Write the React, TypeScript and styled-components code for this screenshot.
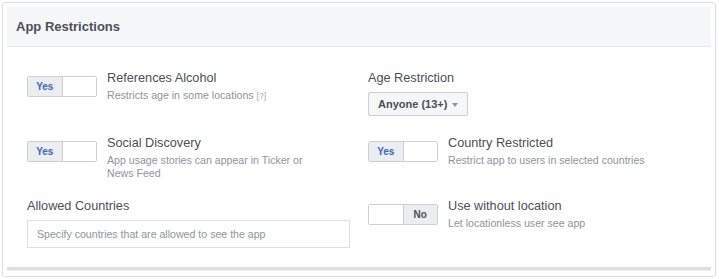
import React from "react";
import styled, { createGlobalStyle } from "styled-components";

const Global = createGlobalStyle`
  html, body { margin: 0; padding: 0; background: #ffffff; }
  body { font-family: "Liberation Sans", Arial, sans-serif; }
  * { box-sizing: border-box; }
`;

const Frame = styled.div`
  margin: 2px 3px 0 2px;
  width: 714px;
  height: 275px;
  border: 1px solid #dcdee1;
  border-radius: 3px;
  padding: 4px;
  background: #fff;
`;

const Panel = styled.section`
  display: flex;
  flex-direction: column;
  height: 263px;
  border-bottom: 3px solid #dddfe2;
  box-shadow: 0 1px 0 #eceef0;
`;

const Header = styled.header`
  height: 40px;
  display: flex;
  align-items: center;
  padding: 0 9px;
  background: #f6f7f9;
  border-bottom: 1px solid #e5e6e9;
`;

const Title = styled.h2`
  margin: 0;
  font-size: 13px;
  font-weight: bold;
  color: #4b4f56;
`;

const Body = styled.div`
  display: grid;
  grid-template-columns: 341px 341px;
  padding: 23px 0 0 20px;
`;

const Cell = styled.div<{ $h: number }>`
  height: ${(p) => p.$h}px;
  display: flex;
  align-items: flex-start;
  gap: 10px;
`;

const Stack = styled.div`
  display: flex;
  flex-direction: column;
`;

const Label = styled.div`
  font-size: 12.7px;
  line-height: 17px;
  color: #4b4f56;
`;

const Sub = styled.div`
  font-size: 10.6px;
  line-height: 13px;
  color: #90949c;
  max-width: 215px;
  margin-top: 2px;
`;

const Help = styled.span`
  font-size: 8.5px;
  color: #a8abb1;
`;

const Toggle = styled.div`
  margin-top: 6px;
  width: 70px;
  height: 21px;
  display: flex;
  border: 1px solid #ccd0d5;
  border-radius: 2px;
  overflow: hidden;
  flex-shrink: 0;
`;

const Half = styled.div<{ $on: boolean; $blue?: boolean }>`
  flex: 1;
  display: flex;
  align-items: center;
  justify-content: center;
  font-size: 10px;
  font-weight: bold;
  color: ${(p) => (p.$blue ? "#4267b2" : "#4b4f56")};
  background: ${(p) => (p.$on ? "#ebedf0" : "#ffffff")};
  & + & {
    border-left: 1px solid #ccd0d5;
  }
`;

const Select = styled.button`
  margin-top: 5px;
  align-self: flex-start;
  height: 24px;
  padding: 0 9px;
  display: flex;
  align-items: center;
  gap: 5px;
  font-family: inherit;
  font-size: 11px;
  font-weight: bold;
  color: #4b4f56;
  background: #f6f7f9;
  border: 1px solid #ced0d4;
  border-radius: 2px;
`;

const Caret = styled.span`
  width: 0;
  height: 0;
  border-left: 3.5px solid transparent;
  border-right: 3.5px solid transparent;
  border-top: 4px solid #90949c;
  margin-top: 1px;
`;

const Input = styled.div`
  margin-top: 5px;
  width: 323px;
  height: 28px;
  border: 1px solid #dddfe2;
  padding: 0 9px;
  display: flex;
  align-items: center;
  font-size: 10.6px;
  color: #90949c;
`;

function Switch({ value }: { value: "yes" | "no" }) {
  return value === "yes" ? (
    <Toggle>
      <Half $on $blue>
        Yes
      </Half>
      <Half $on={false} />
    </Toggle>
  ) : (
    <Toggle>
      <Half $on={false} />
      <Half $on>No</Half>
    </Toggle>
  );
}

export default function App() {
  return (
    <>
      <Global />
      <Frame>
        <Panel>
          <Header>
            <Title>App Restrictions</Title>
          </Header>
          <Body>
            <Cell $h={65}>
              <Switch value="yes" />
              <Stack>
                <Label>References Alcohol</Label>
                <Sub>
                  Restricts age in some locations <Help>[?]</Help>
                </Sub>
              </Stack>
            </Cell>
            <Cell $h={65}>
              <Stack>
                <Label>Age Restriction</Label>
                <Select>
                  Anyone (13+) <Caret />
                </Select>
              </Stack>
            </Cell>
            <Cell $h={63}>
              <Switch value="yes" />
              <Stack>
                <Label>Social Discovery</Label>
                <Sub>App usage stories can appear in Ticker or News Feed</Sub>
              </Stack>
            </Cell>
            <Cell $h={63}>
              <Switch value="yes" />
              <Stack>
                <Label>Country Restricted</Label>
                <Sub>Restrict app to users in selected countries</Sub>
              </Stack>
            </Cell>
            <Cell $h={60}>
              <Stack>
                <Label>Allowed Countries</Label>
                <Input>Specify countries that are allowed to see the app</Input>
              </Stack>
            </Cell>
            <Cell $h={60}>
              <Switch value="no" />
              <Stack>
                <Label>Use without location</Label>
                <Sub>Let locationless user see app</Sub>
              </Stack>
            </Cell>
          </Body>
        </Panel>
      </Frame>
    </>
  );
}
